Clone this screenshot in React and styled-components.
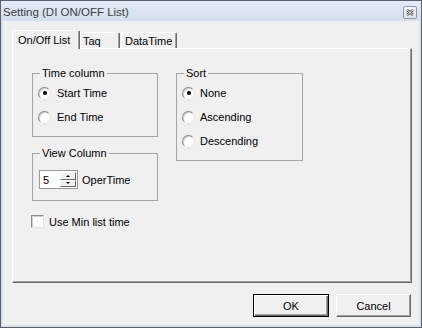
import React from "react";
import styled, { createGlobalStyle } from "styled-components";

const GlobalStyle = createGlobalStyle`
  html, body {
    margin: 0;
    padding: 0;
    background: #ffffff;
  }
  body {
    font-family: "Liberation Sans", Arial, sans-serif;
    font-size: 11px;
    color: #000;
  }
`;

const Window = styled.div`
  width: 422px;
  height: 328px;
  box-sizing: border-box;
  border: 1px solid #5c6068;
  background: #d8e2ee;
  padding: 0 2px 2px 2px;
  display: flex;
  flex-direction: column;
`;

const TitleBar = styled.div`
  height: 20px;
  display: flex;
  align-items: center;
  justify-content: space-between;
  padding: 0 2px 0 0;
  background: linear-gradient(#e2ebf6, #d3dfee);
  margin: 0 -2px;
  padding-left: 2px;
  padding-right: 4px;
`;

const TitleText = styled.div`
  font-size: 11.5px;
  color: #3e3e3e;
  padding-top: 2px;
`;

const CloseBtn = styled.div`
  width: 12px;
  height: 11px;
  border: 1px solid #8e97a4;
  border-radius: 2px;
  background: linear-gradient(#f4f7fb, #dde4ee);
  display: flex;
  align-items: center;
  justify-content: center;
  margin-top: 2px;
`;

const Client = styled.div`
  flex: 1;
  background: #f0f0f0;
  padding: 9px 7px 0 9px;
  display: flex;
  flex-direction: column;
`;

const TabStrip = styled.div`
  height: 18px;
  display: flex;
  align-items: flex-end;
  position: relative;
  z-index: 1;
`;

const Tab = styled.div`
  box-sizing: border-box;
  width: ${(p) => p.$w}px;
  height: ${(p) => (p.$active ? 19 : 16)}px;
  margin-bottom: ${(p) => (p.$active ? -1 : 0)}px;
  margin-left: ${(p) => p.$ml || 0}px;
  padding-left: ${(p) => p.$pl}px;
  padding-top: ${(p) => (p.$active ? 3 : 2)}px;
  background: #f0f0f0;
  border-top: 1px solid #ffffff;
  border-left: 1px solid #ffffff;
  border-right: 1px solid #696969;
  box-shadow: inset -1px 0 0 #a0a0a0;
  border-radius: 2px 2px 0 0;
  white-space: nowrap;
`;

const Panel = styled.div`
  box-sizing: border-box;
  width: 400px;
  height: 235px;
  border-top: 1px solid #ffffff;
  border-left: 1px solid #ffffff;
  border-right: 1px solid #696969;
  border-bottom: 1px solid #696969;
  box-shadow: inset -1px -1px 0 #a0a0a0;
  padding: 18px 0 0 19px;
  display: grid;
  grid-template-columns: 126px 127px;
  column-gap: 18px;
  align-items: start;
`;

const Column = styled.div`
  display: flex;
  flex-direction: column;
`;

const Group = styled.fieldset`
  box-sizing: border-box;
  margin: 0;
  margin-top: ${(p) => p.$mt || 0}px;
  height: ${(p) => p.$h}px;
  padding: ${(p) => p.$pt || 0}px 5px 0 5px;
  border: 1px solid #a6a6a6;
  min-width: 0;
`;

const Legend = styled.legend`
  margin-left: 2px;
  padding: 0 2px;
  line-height: 13px;
  font-size: 11px;
`;

const OptionRow = styled.div`
  height: 24px;
  display: flex;
  align-items: center;
  gap: ${(p) => p.$gap || 5}px;
`;

const Radio = styled.span`
  box-sizing: border-box;
  width: 13px;
  height: 13px;
  border-radius: 50%;
  border: 1px solid;
  border-color: #8c8c8c #e4e4e4 #e4e4e4 #8c8c8c;
  background: #ffffff;
  box-shadow: inset 1px 1px 0 #d0d0d0;
  display: flex;
  align-items: center;
  justify-content: center;
  &::after {
    content: "";
    width: 4px;
    height: 4px;
    border-radius: 50%;
    background: ${(p) => (p.$checked ? "#000" : "transparent")};
  }
`;

const SpinRow = styled.div`
  display: flex;
  align-items: center;
  gap: 4px;
  padding-left: 1px;
`;

const Spin = styled.div`
  box-sizing: border-box;
  width: 39px;
  height: 19px;
  border: 1px solid #9a9a9a;
  background: #ffffff;
  display: flex;
  align-items: stretch;
`;

const SpinValue = styled.div`
  flex: 1;
  padding-left: 3px;
  display: flex;
  align-items: center;
  font-size: 11px;
`;

const SpinButtons = styled.div`
  width: 16px;
  display: flex;
  flex-direction: column;
  padding: 1px 1px 1px 0;
  gap: 0;
`;

const SpinBtn = styled.div`
  flex: 1;
  box-sizing: border-box;
  background: #f0f0f0;
  border-top: 1px solid #ffffff;
  border-left: 1px solid #ffffff;
  border-right: 1px solid #696969;
  border-bottom: 1px solid #696969;
  display: flex;
  align-items: center;
  justify-content: center;
`;

const Arrow = styled.span`
  width: 0;
  height: 0;
  border-left: 2px solid transparent;
  border-right: 2px solid transparent;
  ${(p) =>
    p.$up
      ? "border-bottom: 2px solid #000;"
      : "border-top: 2px solid #000;"}
`;

const CheckRow = styled.div`
  margin-top: 14px;
  margin-left: -1px;
  height: 13px;
  display: flex;
  align-items: center;
  gap: 5px;
`;

const CheckBox = styled.span`
  box-sizing: border-box;
  width: 13px;
  height: 13px;
  border: 1px solid;
  border-color: #8c8c8c #e4e4e4 #e4e4e4 #8c8c8c;
  background: #ffffff;
  box-shadow: inset 1px 1px 0 #cfcfcf;
`;

const ButtonRow = styled.div`
  margin-top: 11px;
  display: flex;
  justify-content: flex-end;
  gap: 7px;
  padding-right: 1px;
`;

const Button = styled.button`
  box-sizing: border-box;
  width: ${(p) => p.$w}px;
  height: 23px;
  padding: 0;
  font-family: "Liberation Sans", Arial, sans-serif;
  font-size: 11px;
  color: #000;
  background: #f0f0f0;
  border-radius: 0;
  ${(p) =>
    p.$default
      ? `border: 1px solid #000;
         box-shadow: inset 1px 1px 0 #ffffff, inset -1px -1px 0 #696969, inset -2px -2px 0 #a0a0a0;`
      : `border-top: 1px solid #ffffff;
         border-left: 1px solid #ffffff;
         border-right: 1px solid #696969;
         border-bottom: 1px solid #696969;
         box-shadow: inset -1px -1px 0 #a0a0a0;`}
`;

const Option = ({ checked, children, gap }) => (
  <OptionRow $gap={gap}>
    <Radio $checked={checked} />
    <span>{children}</span>
  </OptionRow>
);

export default function App() {
  return (
    <>
      <GlobalStyle />
      <Window>
        <TitleBar>
          <TitleText>Setting (DI ON/OFF List)</TitleText>
          <CloseBtn>
            <svg width="8" height="7" viewBox="0 0 8 7">
              <path d="M1 1 L7 6 M7 1 L1 6" stroke="#4a4f57" strokeWidth="2.4" />
              <path d="M1 1 L7 6 M7 1 L1 6" stroke="#ffffff" strokeWidth="0.9" />
            </svg>
          </CloseBtn>
        </TitleBar>
        <Client>
          <TabStrip>
            <Tab $active $w={68} $pl={5}>On/Off List</Tab>
            <Tab $w={40} $pl={2}>Taq</Tab>
            <Tab $w={56} $pl={3} $ml={1}>DataTime</Tab>
          </TabStrip>
          <Panel>
            <Column>
              <Group $h={70} $pt={1}>
                <Legend>Time column</Legend>
                <Option checked gap={6}>Start Time</Option>
                <Option gap={6}>End Time</Option>
              </Group>
              <Group $h={54} $mt={10} $pt={10}>
                <Legend>View Column</Legend>
                <SpinRow>
                  <Spin>
                    <SpinValue>5</SpinValue>
                    <SpinButtons>
                      <SpinBtn><Arrow $up /></SpinBtn>
                      <SpinBtn><Arrow /></SpinBtn>
                    </SpinButtons>
                  </Spin>
                  <span>OperTime</span>
                </SpinRow>
              </Group>
              <CheckRow>
                <CheckBox />
                <span>Use Min list time</span>
              </CheckRow>
            </Column>
            <Column>
              <Group $h={94} $pt={1}>
                <Legend>Sort</Legend>
                <Option checked>None</Option>
                <Option>Ascending</Option>
                <Option>Descending</Option>
              </Group>
            </Column>
          </Panel>
          <ButtonRow>
            <Button $default $w={76}>OK</Button>
            <Button $w={75}>Cancel</Button>
          </ButtonRow>
        </Client>
      </Window>
    </>
  );
}
